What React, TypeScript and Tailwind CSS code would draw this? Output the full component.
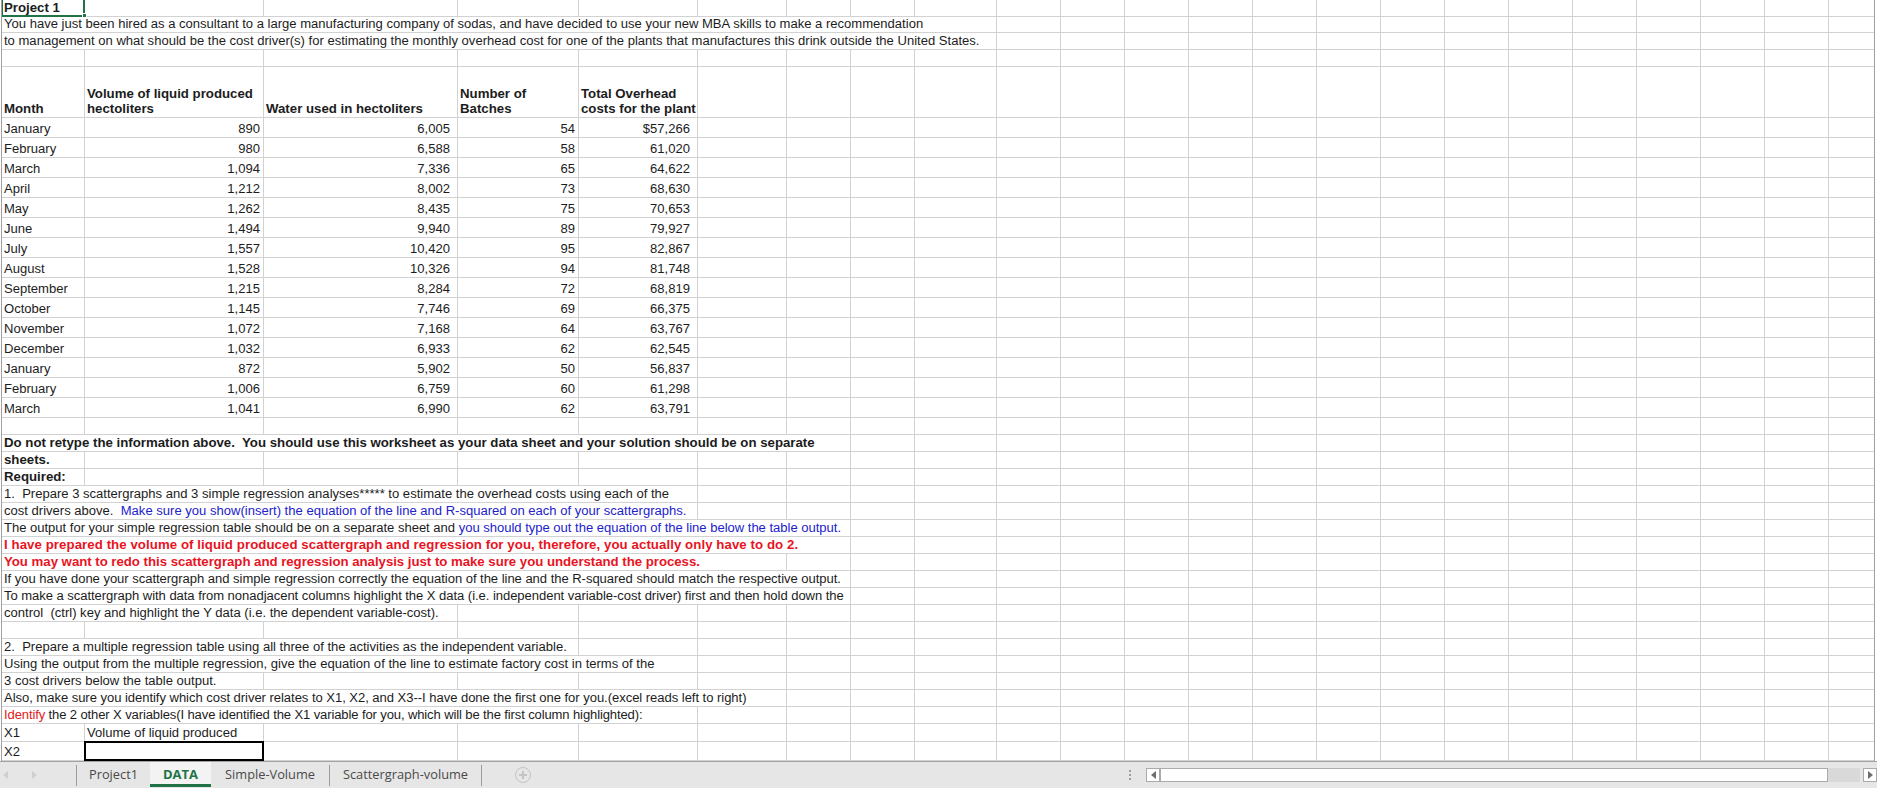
import type { ReactNode } from 'react';
import clsx from 'clsx';

const COLS = 'grid grid-cols-[83px_179px_194px_121px_119px_89px_64px_64px_82px_repeat(13,64px)_45px]';
const TOTAL_COLS = 23;

const SPAN: Record<number, string> = {
  1: 'col-span-1',
  2: 'col-span-2',
  3: 'col-span-3',
  4: 'col-span-4',
  5: 'col-span-5',
  6: 'col-span-6',
  7: 'col-span-7',
  9: 'col-span-9',
};

const RED = 'text-[#e8141f]';
const BLUE = 'text-[#2222cc]';

// month, volume, water, batches, overhead
const DATA = [
  ['January', '890', '6,005', '54', '$57,266'],
  ['February', '980', '6,588', '58', '61,020'],
  ['March', '1,094', '7,336', '65', '64,622'],
  ['April', '1,212', '8,002', '73', '68,630'],
  ['May', '1,262', '8,435', '75', '70,653'],
  ['June', '1,494', '9,940', '89', '79,927'],
  ['July', '1,557', '10,420', '95', '82,867'],
  ['August', '1,528', '10,326', '94', '81,748'],
  ['September', '1,215', '8,284', '72', '68,819'],
  ['October', '1,145', '7,746', '69', '66,375'],
  ['November', '1,072', '7,168', '64', '63,767'],
  ['December', '1,032', '6,933', '62', '62,545'],
  ['January', '872', '5,902', '50', '56,837'],
  ['February', '1,006', '6,759', '60', '61,298'],
  ['March', '1,041', '6,990', '62', '63,791'],
];

interface CellDef {
  span?: number;
  className?: string;
  content?: ReactNode;
  overlay?: ReactNode;
}

const Bold = ({ className, children }: { className?: string; children: ReactNode }) => (
  <b className={clsx('text-[13.24px]', className)}>{children}</b>
);

// fills the rest of the row with empty cells so the gridlines keep going
const Row = ({ height, cells = [] }: { height: string; cells?: CellDef[] }) => {
  const used = cells.reduce((n, c) => n + (c.span ?? 1), 0);
  const rest = Array.from({ length: TOTAL_COLS - used });
  return (
    <div className={clsx(COLS, height)}>
      {cells.map((c, i) => (
        <div
          key={i}
          className={clsx(
            SPAN[c.span ?? 1],
            'relative flex items-end whitespace-nowrap border-r border-b border-[#d2d2d2] pl-[2px] pb-[1px]',
            c.className,
          )}
        >
          <div>{c.content}</div>
          {c.overlay}
        </div>
      ))}
      {rest.map((_, i) => (
        <div
          key={i}
          className={clsx('border-b border-[#d2d2d2]', used + i < TOTAL_COLS - 1 && 'border-r')}
        />
      ))}
    </div>
  );
};

const H17 = 'h-[17px]';

const textRow = (content: ReactNode, span: number, className?: string) => (
  <Row height={H17} cells={[{ span, content, className }]} />
);

const Triangle = ({ left, fill }: { left?: boolean; fill: string }) => (
  <svg width="5" height="8" viewBox="0 0 5 8">
    <path d={left ? 'M5 0V8L0 4Z' : 'M0 0V8L5 4Z'} fill={fill} />
  </svg>
);

const Sep = () => <div className="h-[21px] w-px shrink-0 bg-[#9c9c9c]" />;

const ScrollBtn = ({ left }: { left?: boolean }) => (
  <div className="flex h-[14px] w-[14px] shrink-0 items-center justify-center border border-[#ababab] bg-white">
    <Triangle left={left} fill="#6e6e6e" />
  </div>
);

export default function App() {
  return (
    <div className="flex h-[788px] w-[1877px] flex-col overflow-hidden bg-white font-['Liberation_Sans',Arial,sans-serif] text-[13.05px] leading-[15px] text-[#1c1c1c]">
      <div className="ml-px h-[761px] w-[1874px] overflow-hidden border-r border-l border-r-[#a0a0a0] border-l-[#a0a0a0]">
        <Row
          height="h-[16px]"
          cells={[
            {
              content: <Bold>Project 1</Bold>,
              overlay: (
                <>
                  <div className="absolute -top-px -right-px -bottom-px -left-px border-2 border-t-0 border-[#217346]" />
                  <div className="absolute -right-[3px] -bottom-[2px] h-[5px] w-[5px] border border-white bg-[#217346]" />
                </>
              ),
            },
          ]}
        />
        {textRow(
          'You have just been hired as a consultant to a large manufacturing company of sodas, and have decided to use your new MBA skills to make a recommendation',
          9,
        )}
        {textRow(
          'to management on what should be the cost driver(s) for estimating the monthly overhead cost for one of the plants that manufactures this drink outside the United States.',
          9,
        )}
        <Row height={H17} cells={[{}, {}, {}, {}, {}, {}, {}, {}, {}]} />

        {/* table header */}
        <Row
          height="h-[51px]"
          cells={[
            { content: <Bold>Month</Bold> },
            {
              content: (
                <Bold>
                  Volume of liquid produced
                  <br />
                  hectoliters
                </Bold>
              ),
            },
            { content: <Bold>Water used in hectoliters</Bold> },
            {
              content: (
                <Bold>
                  Number of
                  <br />
                  Batches
                </Bold>
              ),
            },
            {
              content: (
                <Bold>
                  Total Overhead
                  <br />
                  costs for the plant
                </Bold>
              ),
            },
            {},
            {},
            {},
            {},
          ]}
        />

        {DATA.map((d, i) => (
          <Row
            key={i}
            height="h-[20px]"
            cells={[
              { content: d[0] },
              { content: d[1], className: 'justify-end pr-[3px]' },
              { content: d[2], className: 'justify-end pr-[7px]' },
              { content: d[3], className: 'justify-end pr-[3px]' },
              { content: d[4], className: 'justify-end pr-[7px]' },
              {},
              {},
              {},
              {},
            ]}
          />
        ))}

        <Row height={H17} cells={[{}, {}, {}, {}, {}, {}, {}, {}, {}]} />

        {textRow(
          <Bold>
            Do not retype the information above.&nbsp; You should use this worksheet as your data sheet and your
            solution should be on separate
          </Bold>,
          7,
        )}
        <Row height={H17} cells={[{ content: <Bold>sheets.</Bold> }, {}, {}, {}, {}, {}, {}, {}, {}]} />
        <Row height={H17} cells={[{ content: <Bold>Required:</Bold> }, {}, {}, {}, {}, {}, {}, {}, {}]} />
        {textRow(
          <>1.&nbsp; Prepare 3 scattergraphs and 3 simple regression analyses***** to estimate the overhead costs using each of the</>,
          5,
        )}
        {textRow(
          <>
            cost drivers above.&nbsp;{' '}
            <span className={BLUE}>
              Make sure you show(insert) the equation of the line and R-squared on each of your scattergraphs.
            </span>
          </>,
          5,
        )}
        {textRow(
          <>
            The output for your simple regression table should be on a separate sheet and{' '}
            <span className={BLUE}>you should type out the equation of the line below the table output.</span>
          </>,
          7,
          'tracking-[-0.02px]',
        )}
        {textRow(
          <Bold className={clsx(RED, 'tracking-[0.07px]')}>
            I have prepared the volume of liquid produced scattergraph and regression for you, therefore, you actually
            only have to do 2.
          </Bold>,
          7,
        )}
        {textRow(
          <Bold className={clsx(RED, 'tracking-[-0.03px]')}>
            You may want to redo this scattergraph and regression analysis just to make sure you understand the process.
          </Bold>,
          6,
        )}
        {textRow(
          'If you have done your scattergraph and simple regression correctly the equation of the line and the R-squared should match the respective output.',
          7,
          'tracking-[-0.04px]',
        )}
        {textRow(
          'To make a scattergraph with data from nonadjacent columns highlight the X data (i.e. independent variable-cost driver) first and then hold down the',
          7,
          'tracking-[-0.05px]',
        )}
        {textRow(<>control&nbsp; (ctrl) key and highlight the Y data (i.e. the dependent variable-cost).</>, 3)}
        <Row height={H17} cells={[{}, {}, {}, {}, {}, {}, {}, {}, {}]} />
        {textRow(<>2.&nbsp; Prepare a multiple regression table using all three of the activities as the independent variable.</>, 4)}
        {textRow('Using the output from the multiple regression, give the equation of the line to estimate factory cost in terms of the', 5)}
        {textRow('3 cost drivers below the table output.', 2)}
        {textRow(
          'Also, make sure you identify which cost driver relates to X1, X2, and X3--I have done the first one for you.(excel reads left to right)',
          6,
          'tracking-[-0.044px]',
        )}
        {textRow(
          <>
            <span className="text-[#e02020]">Identify</span> the 2 other X variables(I have identified the X1 variable
            for you, which will be the first column highlighted):
          </>,
          5,
          'tracking-[-0.125px]',
        )}
        <Row height="h-[18px]" cells={[{ content: 'X1' }, { content: 'Volume of liquid produced' }]} />
        <Row
          height="h-[19px]"
          cells={[
            { content: 'X2' },
            { overlay: <div className="absolute -top-px -right-px -bottom-px -left-px border-2 border-black" /> },
          ]}
        />
      </div>

      {/* sheet tabs + scrollbar */}
      <div className="flex h-[27px] items-center border-t border-[#a3a3a3] bg-[#e6e6e6] font-['Open_Sans',sans-serif] text-[12.8px] text-[#4a4a4a]">
        <div className="flex w-[76px] shrink-0 items-center gap-[24px] pb-[1px] pl-[3px]">
          <Triangle left fill="#cfcfcf" />
          <Triangle fill="#cfcfcf" />
        </div>
        <Sep />
        <div className="flex w-[73px] shrink-0 justify-center pb-[1px]">Project1</div>
        <div className="flex h-[25px] w-[61px] shrink-0 items-center justify-center self-start border-b-[3px] border-[#217346] bg-[#f3f3f3] pt-[2px] text-[13px] font-bold text-[#217346]">
          DATA
        </div>
        <div className="flex w-[118px] shrink-0 justify-center pb-[1px]">Simple-Volume</div>
        <Sep />
        <div className="flex w-[151px] shrink-0 justify-center pb-[1px]">Scattergraph-volume</div>
        <Sep />
        <div className="ml-[33px] flex h-[16px] w-[16px] shrink-0 items-center justify-center rounded-full border border-[#c4c4c4]">
          <svg width="10" height="10" viewBox="0 0 10 10">
            <path d="M5 1V9M1 5H9" stroke="#c4c4c4" strokeWidth="2" />
          </svg>
        </div>
        <div className="ml-[598px] flex w-[2px] shrink-0 flex-col gap-[2px]">
          <div className="h-[2px] bg-[#9e9e9e]" />
          <div className="h-[2px] bg-[#9e9e9e]" />
          <div className="h-[2px] bg-[#9e9e9e]" />
        </div>
        <div className="ml-[15px] flex items-center">
          <ScrollBtn left />
          <div className="h-[14px] w-[668px] border border-[#ababab] bg-white" />
          <div className="h-[14px] w-[32px] bg-[#d9d9d9]" />
          <div className="w-[3px]" />
          <ScrollBtn />
        </div>
      </div>
    </div>
  );
}
